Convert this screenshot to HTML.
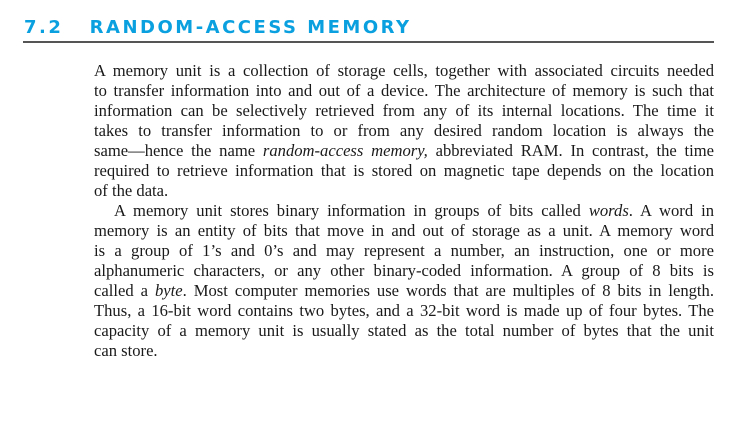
<!DOCTYPE html>
<html><head><meta charset="utf-8"><style>
body{margin:0;width:752px;height:427px;background:#fff;overflow:hidden;position:relative}
h1{position:absolute;left:24px;top:17px;margin:0;font:bold 18px "DejaVu Sans","Liberation Sans",sans-serif;letter-spacing:2.5px;color:#0aa0df;white-space:nowrap}
.rule{position:absolute;left:23px;top:41px;width:691px;height:2px;background:#555}
.t{position:absolute;left:94px;top:61px;width:620px;font:16.6px/20px "Liberation Serif",serif;color:#1a1a1a}
.t div{text-align:justify;text-align-last:justify;white-space:nowrap}
.t div.e{text-align-last:left}
.ind{display:inline-block;width:20px}
</style></head><body>
<h1>7.2&nbsp;&nbsp; RANDOM-ACCESS MEMORY</h1>
<div class="rule"></div>
<div class="t">
<div>A memory unit is a collection of storage cells, together with associated circuits needed</div>
<div>to transfer information into and out of a device. The architecture of memory is such that</div>
<div>information can be selectively retrieved from any of its internal locations. The time it</div>
<div>takes to transfer information to or from any desired random location is always the</div>
<div>same—hence the name <i>random-access memory,</i> abbreviated RAM. In contrast, the time</div>
<div>required to retrieve information that is stored on magnetic tape depends on the location</div>
<div class="e">of the data.</div>
<div><span class="ind"></span>A memory unit stores binary information in groups of bits called <i>words</i>. A word in</div>
<div>memory is an entity of bits that move in and out of storage as a unit. A memory word</div>
<div>is a group of 1’s and 0’s and may represent a number, an instruction, one or more</div>
<div>alphanumeric characters, or any other binary-coded information. A group of 8 bits is</div>
<div>called a <i>byte</i>. Most computer memories use words that are multiples of 8 bits in length.</div>
<div>Thus, a 16-bit word contains two bytes, and a 32-bit word is made up of four bytes. The</div>
<div>capacity of a memory unit is usually stated as the total number of bytes that the unit</div>
<div class="e">can store.</div>
</div>
</body></html>
